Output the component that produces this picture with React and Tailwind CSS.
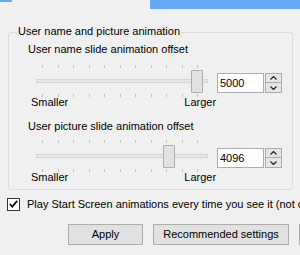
import React from "react";

const ticks = [0, 1, 2, 3, 4, 5, 6, 7, 8, 9, 10];

function Slider({ value, max }) {
  // thumb center runs from 6px to 161px inside the 172px track box
  const center = 6 + (155 * value) / max;
  return (
    <div className="relative w-[172px] h-[33px] shrink-0">
      {ticks.map((i) => (
        <div
          key={"t" + i}
          className="absolute top-0 w-px h-[3px] bg-[#c4c4c4]"
          style={{ left: Math.round(6 + i * 15.5) }}
        />
      ))}
      <div className="absolute left-0 right-0 top-[14px] h-[4px] border border-[#d6d6d6] bg-[#e7e7e7]" />
      <div
        className="absolute top-[5px] w-[12px] h-[23px] border border-[#adadad] bg-[#e2e2e2] rounded-[1px]"
        style={{ left: Math.round(center - 6) }}
      />
      {ticks.map((i) => (
        <div
          key={"b" + i}
          className="absolute top-[29px] w-px h-[3px] bg-[#c4c4c4]"
          style={{ left: Math.round(6 + i * 15.5) }}
        />
      ))}
    </div>
  );
}

function Spin({ value }) {
  return (
    <div className="flex items-start mt-[8px] ml-[9px]">
      <div className="w-[47px] h-[20px] border border-[#abadb3] bg-white pl-[2px] leading-[18px]">
        {value}
      </div>
      <div className="flex flex-col ml-px">
        <div className="w-[17px] h-[10px] border border-[#acacac] bg-[#e5e5e5] flex items-center justify-center">
          <svg width="7" height="4" viewBox="0 0 7 4">
            <path d="M0.5 3.5 L3.5 0.5 L6.5 3.5" fill="none" stroke="#222" strokeWidth="1.2" />
          </svg>
        </div>
        <div className="w-[17px] h-[10px] border border-t-0 border-[#acacac] bg-[#e5e5e5] flex items-center justify-center">
          <svg width="7" height="4" viewBox="0 0 7 4">
            <path d="M0.5 0.5 L3.5 3.5 L6.5 0.5" fill="none" stroke="#222" strokeWidth="1.2" />
          </svg>
        </div>
      </div>
    </div>
  );
}

function SliderBlock({ label, value, max, gapTop }) {
  return (
    <div>
      <div className="ml-[19px] leading-[13px]">{label}</div>
      <div className={"flex ml-[27px] " + gapTop}>
        <Slider value={value} max={max} />
        <Spin value={value} />
      </div>
      <div className="flex mt-[-2px] leading-[13px]">
        <span className="ml-[22px]">Smaller</span>
        <span className="ml-[116px]">Larger</span>
      </div>
    </div>
  );
}

export default function App() {
  return (
    <div
      className="w-[300px] h-[255px] overflow-hidden bg-[#f0f0f0] text-[11px] text-black"
      style={{ fontFamily: '"Liberation Sans", Arial, sans-serif' }}
    >
      <div className="flex h-[9px]">
        <div className="w-[12px] h-[2px] bg-[#65a9f4]" />
        <div className="flex-1" />
        <div className="w-[150px] h-[9px] bg-[#65a9f4]" />
      </div>

      <div className="relative ml-[8px] mt-[23px] w-[285px] h-[158px] border border-[#dcdcdc] rounded-[3px] pt-[10px]">
        <span className="absolute -top-[8px] left-[8px] px-px bg-[#f0f0f0] leading-[13px]">
          User name and picture animation
        </span>
        <SliderBlock label="User name slide animation offset" value={5000} max={5000} gapTop="mt-[9px]" />
        <div className="mt-[11px]">
          <SliderBlock label="User picture slide animation offset" value={4096} max={5000} gapTop="mt-[7px]" />
        </div>
      </div>

      <div className="flex items-center mt-[6px] ml-[7px] whitespace-nowrap">
        <div className="w-[13px] h-[13px] border border-[#333] bg-white flex items-center justify-center shrink-0">
          <svg width="9" height="8" viewBox="0 0 9 8">
            <path d="M0.8 4 L3.3 6.6 L8.2 0.8" fill="none" stroke="#111" strokeWidth="1.8" />
          </svg>
        </div>
        <span className="ml-[7px]">Play Start Screen animations every time you see it (not only the first time)</span>
      </div>

      <div className="flex mt-[11px] ml-[68px] gap-[10px] whitespace-nowrap">
        <button className="w-[75px] h-[21px] border border-[#adadad] bg-[#e1e1e1] shrink-0">Apply</button>
        <button className="w-[136px] h-[21px] border border-[#adadad] bg-[#e1e1e1] shrink-0">Recommended settings</button>
        <button className="w-[75px] h-[21px] border border-[#adadad] bg-[#e1e1e1] shrink-0">Cancel</button>
      </div>
    </div>
  );
}
